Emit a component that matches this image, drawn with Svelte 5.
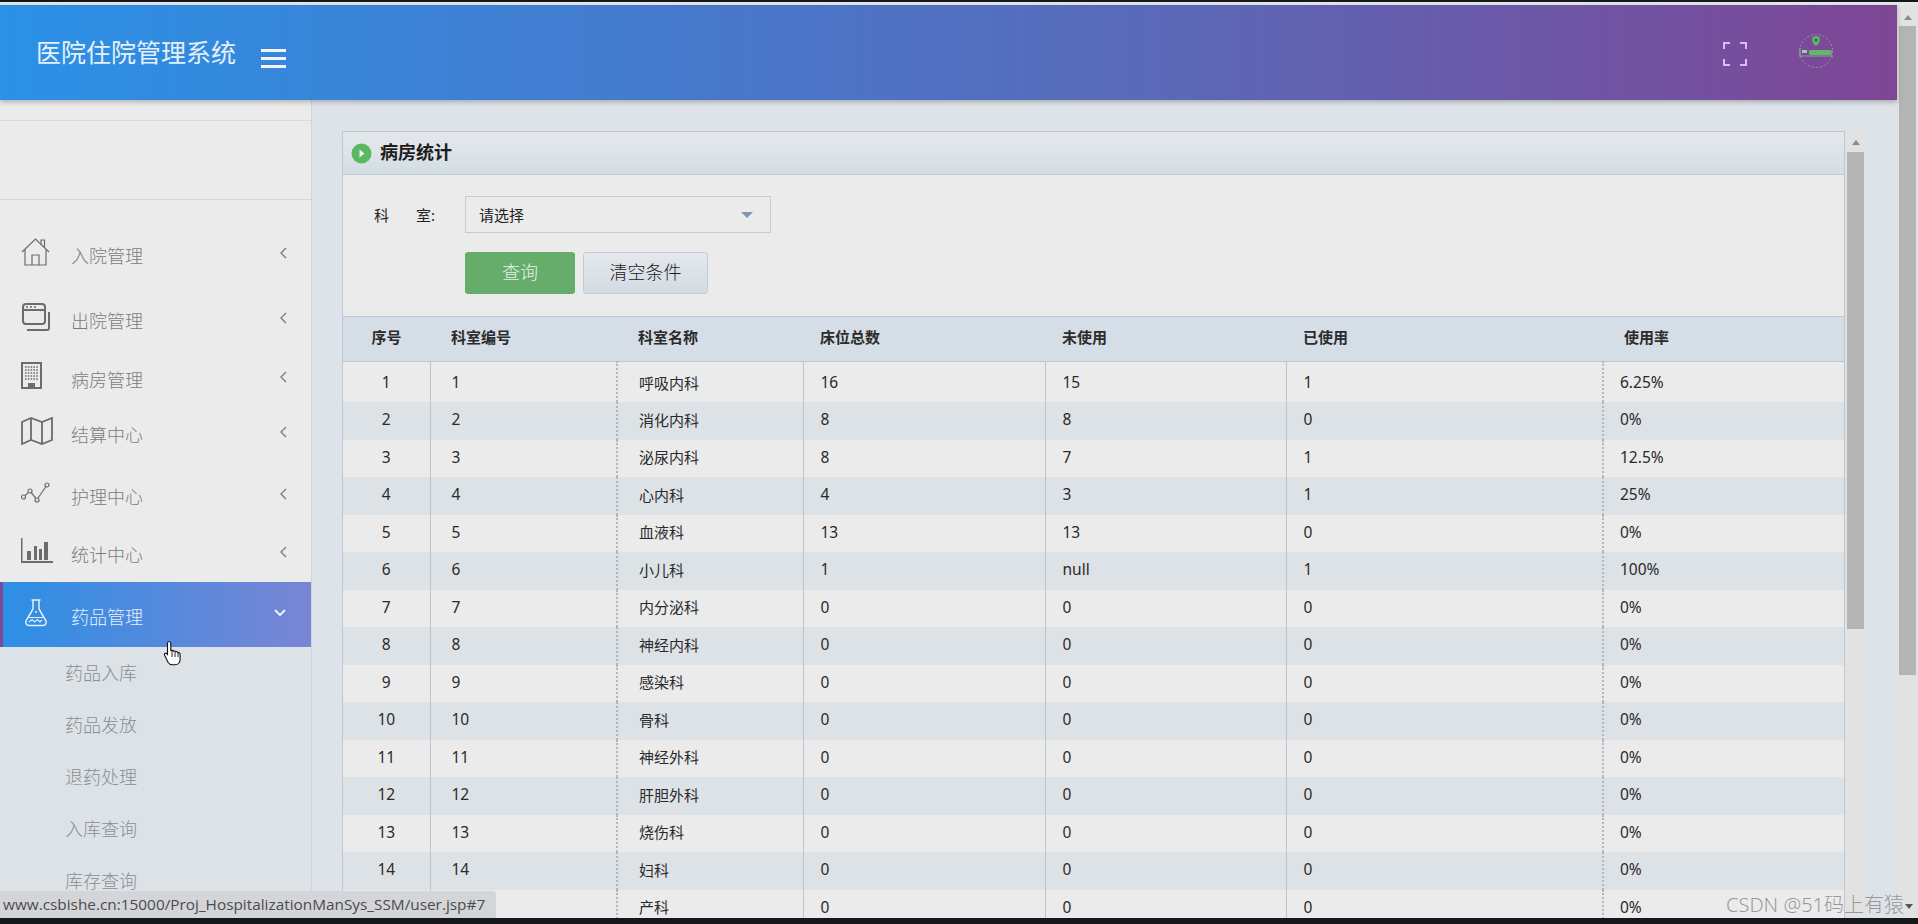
<script>
  const menu = [
    { name: '入院管理', icon: 'home', h: 60 },
    { name: '出院管理', icon: 'window', h: 70 },
    { name: '病房管理', icon: 'building', h: 48 },
    { name: '结算中心', icon: 'map', h: 62 },
    { name: '护理中心', icon: 'line', h: 62 },
    { name: '统计中心', icon: 'bars', h: 54 },
    { name: '药品管理', icon: 'flask', h: 65, active: true }
  ];
  const subMenu = ['药品入库', '药品发放', '退药处理', '入库查询', '库存查询'];

  const rows = [
    ['呼吸内科', 16, 15, 1, '6.25%'],
    ['消化内科', 8, 8, 0, '0%'],
    ['泌尿内科', 8, 7, 1, '12.5%'],
    ['心内科', 4, 3, 1, '25%'],
    ['血液科', 13, 13, 0, '0%'],
    ['小儿科', 1, 'null', 1, '100%'],
    ['内分泌科', 0, 0, 0, '0%'],
    ['神经内科', 0, 0, 0, '0%'],
    ['感染科', 0, 0, 0, '0%'],
    ['骨科', 0, 0, 0, '0%'],
    ['神经外科', 0, 0, 0, '0%'],
    ['肝胆外科', 0, 0, 0, '0%'],
    ['烧伤科', 0, 0, 0, '0%'],
    ['妇科', 0, 0, 0, '0%'],
    ['产科', 0, 0, 0, '0%']
  ];
</script>

<div class="screen">
  <div class="top-edge"></div>
  <div class="window">
    <div class="app">
      <header class="header">
        <div class="title">医院住院管理系统</div>
        <div class="burger"><span></span><span></span><span></span></div>
        <div class="header-right">
          <svg class="fullscreen" width="26" height="26" viewBox="0 0 26 26" fill="none" stroke="#d9bdf0" stroke-width="2">
            <path d="M2 8V2h6M18 2h6v6M24 18v6h-6M8 24H2v-6" />
          </svg>
          <svg class="avatar" width="36" height="36" viewBox="0 0 36 36" fill="none">
            <circle cx="18" cy="18" r="16.500" stroke="#a69cc0" stroke-width="0.8" stroke-dasharray="2 2" />
            <path d="M18 3c3 0 4 2 4 4 0 3-4 6-4 6s-4-3-4-6c0-2 1-4 4-4z" fill="#62b56a" />
            <circle cx="18" cy="7" r="1.500" fill="#2d6b46" />
            <path d="M2 15v9M2 23h32v1.500" stroke="#7fa98a" stroke-width="1.200" />
            <rect x="4" y="17" width="5" height="3" fill="#a5c9a0" />
            <rect x="11" y="17" width="23" height="5" rx="1.500" fill="#62b56a" />
          </svg>
        </div>
      </header>

      <div class="content">
        <aside class="sidebar">
          <div class="user-box"></div>
          <nav class="menu">
            {#each menu as item}
              <div class="menu-item" class:active={item.active} style="height: {item.h}px">
                <span class="menu-icon">
                  {#if item.icon === 'home'}
                    <svg width="30" height="30" viewBox="0 0 30 30" fill="none" stroke="currentColor" stroke-width="1.200">
                      <path d="M1 15 14.500 2 28 15M4 13v15h21V13M11 28v-10h7v10M20 7V3h3.500v7.500" />
                    </svg>
                  {:else if item.icon === 'window'}
                    <svg width="30" height="30" viewBox="0 0 30 30" fill="none" stroke="currentColor" stroke-width="2">
                      <rect x="2" y="2" width="22" height="20" rx="3" />
                      <path d="M2 8h22M6 28h20a2 2 0 0 0 2-2V10" />
                      <path d="M5 5h2M9 5h2M13 5h2" stroke-width="1.400" />
                    </svg>
                  {:else if item.icon === 'building'}
                    <svg width="22" height="28" viewBox="0 0 22 28">
                      <path fill="currentColor" fill-rule="evenodd" d="M0 0h21v27H0zM2 2v23h5v-4h7v4h5V2z" />
                      <path stroke="currentColor" stroke-width="1.600" stroke-dasharray="1.600 1.200" d="M4 5h14M4 8h14M4 11h14M4 14h14M4 17h14" />
                    </svg>
                  {:else if item.icon === 'map'}
                    <svg width="32" height="28" viewBox="0 0 32 28" fill="none" stroke="currentColor" stroke-width="1.800">
                      <path d="M1 5 10 1l11 4 10-4v22l-10 4-11-4-9 4zM10 1v22M21 5v22" />
                    </svg>
                  {:else if item.icon === 'line'}
                    <svg width="30" height="22" viewBox="0 0 30 22" fill="none" stroke="currentColor" stroke-width="1.200">
                      <circle cx="2.500" cy="15" r="2" />
                      <circle cx="9" cy="9" r="2" />
                      <circle cx="16" cy="18" r="2" />
                      <circle cx="26" cy="3" r="2" />
                      <path d="m4 13.500 3.500-3M10.500 11l4.500 5.500M17 16l8-11.500" />
                    </svg>
                  {:else if item.icon === 'bars'}
                    <svg width="32" height="26" viewBox="0 0 32 26" fill="currentColor">
                      <path d="M0 0h1.500v23H32v2H0z" />
                      <rect x="6" y="13" width="4" height="9" />
                      <rect x="13" y="8" width="3" height="14" />
                      <rect x="18" y="11" width="3" height="11" />
                      <rect x="23" y="4" width="4" height="18" />
                    </svg>
                  {:else}
                    <svg width="24" height="28" viewBox="0 0 24 28" fill="none" stroke="currentColor" stroke-width="1.500">
                      <path d="M7.500 1h9M9 1.500v8.500L2.200 21.500C1 24 2.200 26.500 5 26.500h14c2.800 0 4-2.500 2.800-5L15 10V1.500" />
                      <path d="M5 18.500h14M5 23l3-2.500 2.500 2.500 3-2.500 2.500 2.500 2-2" stroke-width="1.200" />
                      <circle cx="12" cy="13" r="1" fill="currentColor" stroke="none" />
                    </svg>
                  {/if}
                </span>
                <span class="menu-text">{item.name}</span>
                <span class="menu-arrow">
                  {#if item.active}
                    <svg width="12" height="8" viewBox="0 0 12 8" fill="none" stroke="currentColor" stroke-width="2"><path d="m1 1 5 5 5-5" /></svg>
                  {:else}
                    <svg width="7" height="12" viewBox="0 0 7 12" fill="none" stroke="currentColor" stroke-width="1.400"><path d="M6 1 1 6l5 5" /></svg>
                  {/if}
                </span>
              </div>
            {/each}
          </nav>
          <ul class="sub-menu">
            {#each subMenu as sub}
              <li>{sub}</li>
            {/each}
          </ul>
        </aside>

        <main class="main">
          <section class="panel">
            <div class="panel-title">
              <svg width="21" height="21" viewBox="0 0 21 21">
                <circle cx="10.500" cy="10.500" r="10" fill="#5cb860" />
                <path d="M8.500 6.500v8l5-4z" fill="#f0f0f0" />
              </svg>
              <span>病房统计</span>
            </div>
            <div class="filter">
              <div class="field">
                <label class="field-label" for="dept"><span>科</span><span>室:</span></label>
                <div class="select" id="dept">
                  <span>请选择</span>
                  <i class="caret"></i>
                </div>
              </div>
              <div class="actions">
                <button class="btn btn-query">查询</button>
                <button class="btn btn-clear">清空条件</button>
              </div>
            </div>
            <table>
              <colgroup>
                <col style="width: 87px" />
                <col style="width: 187px" />
                <col style="width: 186px" />
                <col style="width: 242px" />
                <col style="width: 241px" />
                <col style="width: 317px" />
                <col />
              </colgroup>
              <thead>
                <tr>
                  <th class="center">序号</th>
                  <th>科室编号</th>
                  <th>科室名称</th>
                  <th>床位总数</th>
                  <th>未使用</th>
                  <th>已使用</th>
                  <th>使用率</th>
                </tr>
              </thead>
              <tbody>
                {#each rows as row, i}
                  <tr>
                    <td class="center">{i + 1}</td>
                    <td>{i + 1}</td>
                    {#each row as cell}
                      <td>{cell}</td>
                    {/each}
                  </tr>
                {/each}
              </tbody>
            </table>
          </section>
          <div class="scrollbar inner">
            <i class="up"></i>
            <div class="thumb"></div>
          </div>
        </main>
      </div>
    </div>
    <div class="scrollbar outer">
      <i class="up"></i>
      <div class="thumb"></div>
    </div>
  </div>
  <div class="bottom-edge"></div>

  <!-- browser link preview, sits over the page -->
  <div class="status">www.csbishe.cn:15000/Proj_HospitalizationManSys_SSM/user.jsp#7</div>
  <div class="watermark">CSDN @51码上有猿<i class="mark-caret"></i></div>
  <svg class="cursor" width="20" height="26" viewBox="0 0 20 26">
    <path d="M6 1.500c1.200 0 1.800.8 1.800 2v7l1.200-.3c1 0 1.400.5 1.500 1 .8-.4 2-.3 2.300.6.800-.3 2-.2 2.300.9 1-.2 2 .3 2 1.500v5c0 3-2 5.500-5 5.500H9c-2 0-3-1-4-2.500L1.500 15c-.8-1.200 1-2.500 2-1.500l1 1V3.500c0-1.200.4-2 1.500-2z" fill="#fff" stroke="#111" stroke-width="1.100" />
    <path d="M9 11v6M12 12v5M15 13v4" stroke="#111" stroke-width="0.9" fill="none" />
  </svg>
</div>

<style>
  :global(body) {
    margin: 0;
    overflow: hidden;
    background: #111;
  }

  .screen {
    position: relative;
    width: 1918px;
    height: 924px;
    overflow: hidden;
    display: flex;
    flex-direction: column;
    font-family: "Noto Sans", "Noto Sans CJK SC", sans-serif;
    color: #222;
  }

  .top-edge {
    height: 5px;
    flex: none;
    box-sizing: border-box;
    border-top: 2px solid #16181a;
    background: #e6e9ec;
  }

  .window {
    flex: 1;
    min-height: 0;
    display: flex;
    background: #e6e8ea;
  }

  .bottom-edge {
    height: 6px;
    flex: none;
    background: #15171a;
  }

  .app {
    width: 1897px;
    flex: none;
    display: flex;
    flex-direction: column;
    min-height: 0;
  }

  .header {
    height: 95px;
    flex: none;
    display: flex;
    align-items: center;
    background: linear-gradient(90deg, #2a91e7 0%, #5b68b8 62%, #7e4695 100%);
    box-shadow: 0 2px 5px rgba(0, 0, 0, 0.25);
    position: relative;
    z-index: 2;
  }

  .title {
    margin-left: 36px;
    margin-top: -3px;
    font-size: 25px;
    color: #e6f0f9;
  }

  .burger {
    margin-left: 25px;
    margin-top: 11px;
    width: 25px;
    display: flex;
    flex-direction: column;
    gap: 5px;
  }

  .burger span {
    height: 3px;
    background: #f2f6fb;
  }

  .header-right {
    margin-left: auto;
    display: flex;
    align-items: center;
    gap: 50px;
    padding-right: 63px;
  }

  .fullscreen {
    margin-top: 3px;
  }

  .avatar {
    margin-top: -3px;
  }

  .content {
    flex: 1;
    min-height: 0;
    display: flex;
  }

  .sidebar {
    width: 311px;
    flex: none;
    overflow: hidden;
    border-right: 1px solid #ced4d9;
    background: #ebebeb;
    display: flex;
    flex-direction: column;
  }

  .user-box {
    height: 78px;
    margin-top: 20px;
    flex: none;
    border-top: 1px solid #d8dadc;
    border-bottom: 1px solid #d5d8da;
  }

  .menu {
    padding-top: 26px;
    flex: none;
  }

  .menu-item {
    display: flex;
    align-items: center;
    color: #7c7c7c;
    font-size: 18px;
    box-sizing: border-box;
    position: relative;
  }

  .menu-icon {
    width: 71px;
    padding-left: 21px;
    box-sizing: border-box;
    display: flex;
    margin-top: -8px;
    color: #6c6c6c;
  }

  .menu-text {
    flex: 1;
    font-weight: 300;
    padding-bottom: 2px;
  }

  .menu-arrow {
    width: 15px;
    flex: none;
    display: flex;
    margin-top: -7px;
    margin-right: 16px;
  }

  .menu-item.active {
    color: #e4f0fb;
    background: linear-gradient(90deg, #2c8fe6 0%, #7a85d4 100%);
    border-left: 3px solid #7d4697;
  }

  .menu-item.active .menu-icon {
    padding-left: 21px;
    width: 68px;
    margin-top: -3px;
    color: #e4f0fb;
  }

  .menu-item.active .menu-arrow {
    width: 21px;
    margin-top: -3px;
  }

  .menu-item.active .menu-text {
    padding-top: 3px;
    padding-bottom: 0;
  }

  .sub-menu {
    flex: 1;
    list-style: none;
    margin: 0;
    padding: 0;
    background: #dde2e7;
  }

  .sub-menu li {
    height: 52px;
    line-height: 52px;
    padding-left: 65px;
    font-size: 18px;
    font-weight: 300;
    color: #898e93;
  }

  .main {
    flex: 1;
    min-width: 0;
    display: flex;
    background: #dde3e8;
    padding: 31px 0 0 30px;
  }

  .panel {
    width: 1503px;
    flex: none;
    box-sizing: border-box;
    border: 1px solid #bdc7d1;
    border-bottom: none;
    background: #ebebeb;
    overflow: hidden;
  }

  .panel-title {
    height: 42px;
    display: flex;
    align-items: center;
    gap: 8px;
    padding-left: 8px;
    border-bottom: 1px solid #c3ccd6;
    background: linear-gradient(180deg, #e3e7ea 0%, #dfe4e8 45%, #d2dde4 100%);
    font-size: 18px;
    font-weight: 700;
    color: #1d1d1d;
  }

  .panel-title span {
    padding-bottom: 4px;
  }

  .filter {
    height: 141px;
    box-sizing: border-box;
    padding: 21px 0 0 31px;
  }

  .field {
    display: flex;
    align-items: center;
  }

  .field-label {
    width: 91px;
    display: flex;
    gap: 27px;
    font-size: 15px;
  }

  .select {
    width: 306px;
    height: 37px;
    box-sizing: border-box;
    padding: 0 13px;
    display: flex;
    align-items: center;
    justify-content: space-between;
    border: 1px solid #c6ccd2;
    font-size: 15px;
  }

  .caret {
    width: 0;
    height: 0;
    border: 6px solid transparent;
    border-top: 6px solid #7f97b0;
    border-bottom: none;
    margin-right: 4px;
  }

  .actions {
    display: flex;
    gap: 8px;
    margin: 19px 0 0 91px;
  }

  .btn {
    height: 42px;
    padding: 0 0 4px;
    border-radius: 3px;
    font-family: inherit;
    font-size: 18px;
    font-weight: 300;
  }

  .btn-query {
    width: 110px;
    border: none;
    background: #66ac6a;
    color: #e6f2e7;
  }

  .btn-clear {
    width: 125px;
    border: 1px solid #c3ccd6;
    background: linear-gradient(180deg, #e4e8ec 0%, #d3dbe3 100%);
    color: #222;
  }

  table {
    width: 100%;
    border-collapse: collapse;
    table-layout: fixed;
  }

  th {
    height: 45px;
    padding: 0 0 5px 21px;
    text-align: left;
    font-size: 15px;
    font-weight: 700;
    color: #2b2b2b;
    background: #d5dde6;
    border-top: 1px solid #c0c9d3;
    border-bottom: 1px solid #bfc8d2;
    box-sizing: border-box;
  }

  td {
    height: 37.500px;
    padding: 0 0 3px 21px;
    font-size: 15.500px;
    color: #2a2a2a;
    border-left: 1px solid #bfc4c9;
    box-sizing: border-box;
  }

  tbody tr:first-child td {
    height: 40.500px;
    padding-bottom: 0;
  }

  td:first-child {
    border-left: none;
  }

  td:nth-child(3) {
    font-size: 15px;
    border-left: 2px dotted #b3b6ba;
  }

  td:nth-child(7) {
    padding-left: 16px;
    border-left: 2px dotted #b3b6ba;
  }

  td:nth-child(4),
  td:nth-child(5),
  td:nth-child(6),
  th:nth-child(4),
  th:nth-child(5),
  th:nth-child(6) {
    padding-left: 17px;
  }

  th.center {
    padding: 0 0 5px;
    text-align: center;
  }

  td.center {
    padding-left: 0;
    text-align: center;
  }

  tbody tr:nth-child(even) td {
    background: #dde2e7;
  }

  .scrollbar {
    flex: none;
    display: flex;
    flex-direction: column;
    align-items: center;
    background: #e2e2e2;
  }

  .scrollbar.inner {
    width: 21px;
    padding-top: 9px;
  }

  .scrollbar.inner .up {
    margin-bottom: 7px;
  }

  .scrollbar.inner .thumb {
    height: 477px;
  }

  .scrollbar.outer {
    width: 21px;
    padding-top: 10px;
  }

  .scrollbar.outer .up {
    margin-bottom: 6px;
  }

  .scrollbar.outer .thumb {
    height: 649px;
  }

  .up {
    width: 0;
    height: 0;
    border: 4px solid transparent;
    border-bottom: 5px solid #8c8c8c;
    border-top: none;
  }

  .thumb {
    width: 17px;
    background: #b4b4b4;
  }

  .status {
    position: absolute;
    left: 0;
    top: 891px;
    height: 27px;
    width: 496px;
    box-sizing: border-box;
    padding-left: 3px;
    line-height: 27px;
    font-family: "Open Sans", sans-serif;
    font-size: 15.350px;
    white-space: nowrap;
    color: #4b4b4b;
    background: #d3d5d8;
    border-top-right-radius: 3px;
  }

  .watermark {
    position: absolute;
    right: 5px;
    top: 889px;
    display: flex;
    align-items: center;
    gap: 1px;
    font-size: 20px;
    font-weight: 300;
    color: rgba(125, 125, 125, 0.75);
    white-space: nowrap;
  }

  .mark-caret {
    width: 0;
    height: 0;
    border: 4px solid transparent;
    border-top: 5px solid #555;
    border-bottom: none;
    margin-top: 6px;
  }

  .cursor {
    position: absolute;
    left: 163px;
    top: 640px;
  }
</style>
